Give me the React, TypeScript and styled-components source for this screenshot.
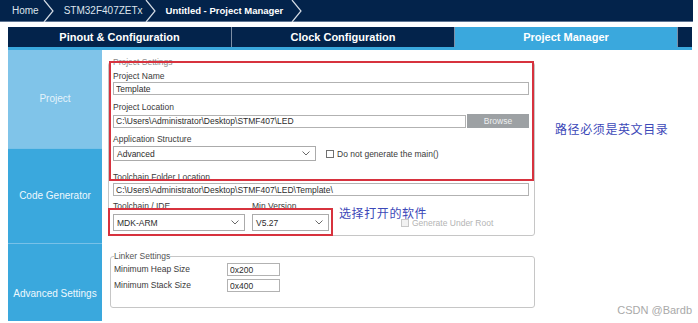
import React from 'react'
import styled, { createGlobalStyle } from 'styled-components'

const GlobalStyle = createGlobalStyle`
  html, body { margin: 0; padding: 0; background: #fff; }
  body { font-family: "Liberation Sans", Arial, sans-serif; }
  * { box-sizing: border-box; }
`

const Page = styled.div`
  width: 698px;
  height: 323px;
  overflow: hidden;
  position: relative;
  background: #fff;
`

const Breadcrumbs = styled.div`
  display: flex;
  align-items: center;
  width: 693px;
  height: 22px;
  padding-left: 12px;
  background: #03234b;
  border-bottom: 1px solid #5d7391;
`

const Crumb = styled.div<{ $bold?: boolean; $gap: number }>`
  display: flex;
  align-items: center;
  height: 100%;
  margin-right: 10px;
  color: ${({ $bold }) => $bold ? '#fff' : '#dde4ec'};
  font-size: ${({ $bold }) => $bold ? '9.5px' : '10px'};
  font-weight: ${({ $bold }) => $bold ? 'bold' : 'normal'};
  white-space: nowrap;

  svg {
    margin-left: ${({ $gap }) => $gap}px;
  }
`

const TabBar = styled.div`
  display: flex;
  margin: 5px 0 0 8px;
  width: 684px;
  height: 20px;
  background: #03234b;
`

const Tab = styled.div<{ $active?: boolean }>`
  width: 223px;
  display: flex;
  align-items: center;
  justify-content: center;
  background: ${({ $active }) => $active ? '#3aa8dd' : '#03234b'};
  color: #fff;
  font-size: 11px;
  font-weight: bold;

  & + & {
    border-left: 1px solid #7d8ea5;
  }
`

const TabFill = styled.div`
  flex: 1;
  border-left: 1px solid #7d8ea5;
`

const Strip = styled.div`
  margin-left: 8px;
  width: 684px;
  height: 3px;
  background: #3aa8dd;
`

const Body = styled.div`
  display: flex;
  margin-left: 8px;
  height: 273px;
`

const Sidebar = styled.div`
  width: 94px;
  display: flex;
  flex-direction: column;
`

const SideItem = styled.div<{ $light?: boolean; $h: number; $top?: number }>`
  height: ${({ $h }) => $h}px;
  display: flex;
  justify-content: center;
  align-items: ${({ $top }) => $top ? 'flex-start' : 'center'};
  padding-top: ${({ $top }) => $top || 0}px;
  background: ${({ $light }) => $light ? '#80c4e9' : '#3aa8dd'};
  color: ${({ $light }) => $light ? '#e4f3fb' : '#eef8fd'};
  font-size: 10px;
  line-height: 12px;
  white-space: nowrap;

  & + & {
    border-top: 1px solid #78c1e8;
  }
`

const Panel = styled.div`
  position: relative;
  flex: 1;
  padding: 7px 0 0 6px;
`

const Group = styled.fieldset<{ $w: number; $ml?: number; $mt?: number; $pl: number; $pb: number }>`
  margin: ${({ $mt }) => $mt || 0}px 0 0 ${({ $ml }) => $ml || 0}px;
  width: ${({ $w }) => $w}px;
  min-width: 0;
  padding: 0 5px ${({ $pb }) => $pb}px ${({ $pl }) => $pl}px;
  border: 1px solid #c6c6c6;
  border-radius: 3px;

  legend {
    padding: 0;
    font-size: 8.5px;
    line-height: 11px;
  }
`

const Legend = styled.legend<{ $muted?: boolean }>`
  color: ${({ $muted }) => $muted ? '#8a8a8a' : '#555'};
`

const Label = styled.div<{ $mt: number; $w?: number }>`
  margin-top: ${({ $mt }) => $mt}px;
  width: ${({ $w }) => $w ? `${$w}px` : 'auto'};
  font-size: 8.5px;
  line-height: 11px;
  color: #3a3a3a;
  white-space: nowrap;
`

const Row = styled.div<{ $mt: number }>`
  display: flex;
  align-items: center;
  margin-top: ${({ $mt }) => $mt}px;
`

const TextBox = styled.input<{ $w?: number }>`
  display: block;
  width: ${({ $w }) => $w ? `${$w}px` : '100%'};
  height: 13px;
  margin: 0;
  padding: 0 2px;
  border: 1px solid #b2b2b2;
  background: #fff;
  font-family: inherit;
  font-size: 8.5px;
  color: #2c2c2c;
  outline: none;
`

const Button = styled.div`
  width: 62px;
  height: 14px;
  margin-left: 1px;
  display: flex;
  align-items: center;
  justify-content: center;
  background: #9da1a4;
  color: #eef0f1;
  font-size: 8.5px;
`

const Select = styled.div<{ $w: number; $h: number; $ml?: number }>`
  width: ${({ $w }) => $w}px;
  height: ${({ $h }) => $h}px;
  margin-left: ${({ $ml }) => $ml || 0}px;
  display: flex;
  align-items: center;
  justify-content: space-between;
  padding: 0 5px 0 3px;
  border: 1px solid #ababab;
  background: #fff;
  font-size: 8.5px;
  color: #2c2c2c;
`

const Check = styled.div<{ $disabled?: boolean; $ml: number }>`
  display: flex;
  align-items: center;
  margin-left: ${({ $ml }) => $ml}px;
  font-size: 8.5px;
  color: ${({ $disabled }) => $disabled ? '#b4b4b4' : '#3a3a3a'};
  white-space: nowrap;

  span {
    width: 8px;
    height: 8px;
    margin-right: 3px;
    border: 1px solid ${({ $disabled }) => $disabled ? '#c8c8c8' : '#707070'};
    background: ${({ $disabled }) => $disabled ? '#f2f2f2' : '#fff'};
  }
`

const Mark = styled.div<{ $x: number; $y: number; $w: number; $h: number }>`
  position: absolute;
  left: ${({ $x }) => $x}px;
  top: ${({ $y }) => $y}px;
  width: ${({ $w }) => $w}px;
  height: ${({ $h }) => $h}px;
  border: 2px solid #d7323e;
  pointer-events: none;
`

const Note = styled.div<{ $x: number; $y: number }>`
  position: absolute;
  left: ${({ $x }) => $x}px;
  top: ${({ $y }) => $y}px;
  font-family: "Noto Sans CJK SC", sans-serif;
  font-size: 12px;
  line-height: 14px;
  letter-spacing: 0.6px;
  color: #3c48b8;
  white-space: nowrap;
`

const Watermark = styled.div`
  position: absolute;
  right: 6px;
  bottom: 7px;
  font-size: 11px;
  line-height: 12px;
  color: #a9a9a9;
`

const Chevron = () => (
  <svg width="11" height="22" viewBox="0 0 11 22">
    <polyline points="1,0 10,11 1,22" fill="none" stroke="#d4dbe4" strokeWidth="1.2" />
  </svg>
)

const Caret = () => (
  <svg width="8" height="5" viewBox="0 0 8 5">
    <polyline points="0.5,0.5 4,4 7.5,0.5" fill="none" stroke="#6a6a6a" strokeWidth="1" />
  </svg>
)

export default function App() {
  return (
    <Page>
      <GlobalStyle />
      <Breadcrumbs>
        <Crumb $gap={4}>Home<Chevron /></Crumb>
        <Crumb $gap={2}>STM32F407ZETx<Chevron /></Crumb>
        <Crumb $gap={8} $bold>Untitled - Project Manager<Chevron /></Crumb>
      </Breadcrumbs>

      <TabBar>
        <Tab>Pinout &amp; Configuration</Tab>
        <Tab>Clock Configuration</Tab>
        <Tab $active>Project Manager</Tab>
        <TabFill />
      </TabBar>
      <Strip />

      <Body>
        <Sidebar>
          <SideItem $light $h={98}>Project</SideItem>
          <SideItem $h={95}>Code Generator</SideItem>
          <SideItem $h={78} $top={44}>Advanced Settings</SideItem>
        </Sidebar>

        <Panel>
          <Group $w={427} $pl={4} $pb={4}>
            <Legend $muted>Project Settings</Legend>
            <Label $mt={3}>Project Name</Label>
            <TextBox readOnly value="Template" />
            <Label $mt={7}>Project Location</Label>
            <Row $mt={1}>
              <TextBox readOnly $w={353} value="C:\Users\Administrator\Desktop\STMF407\LED" />
              <Button>Browse</Button>
            </Row>
            <Label $mt={6}>Application Structure</Label>
            <Row $mt={1}>
              <Select $w={203} $h={15}>Advanced<Caret /></Select>
              <Check $ml={10}><span />Do not generate the main()</Check>
            </Row>
            <Label $mt={11}>Toolchain Folder Location</Label>
            <TextBox readOnly value="C:\Users\Administrator\Desktop\STMF407\LED\Template\" />
            <Row $mt={5}>
              <Label $mt={0} $w={139}>Toolchain / IDE</Label>
              <Label $mt={0}>Min Version</Label>
            </Row>
            <Row $mt={2}>
              <Select $w={132} $h={17}>MDK-ARM<Caret /></Select>
              <Select $w={77} $h={17} $ml={7}>V5.27<Caret /></Select>
              <Check $ml={72} $disabled><span />Generate Under Root</Check>
            </Row>
          </Group>

          <Group $w={425} $ml={2} $mt={15} $pl={3} $pb={15}>
            <Legend>Linker Settings</Legend>
            <Row $mt={1}>
              <Label $mt={0} $w={113}>Minimum Heap Size</Label>
              <TextBox readOnly $w={53} value="0x200" />
            </Row>
            <Row $mt={3}>
              <Label $mt={0} $w={113}>Minimum Stack Size</Label>
              <TextBox readOnly $w={53} value="0x400" />
            </Row>
          </Group>

          <Mark $x={7} $y={11} $w={425} $h={120} />
          <Mark $x={6} $y={158} $w={225} $h={28} />
          <Note $x={453} $y={72}>路径必须是英文目录</Note>
          <Note $x={237} $y={156}>选择打开的软件</Note>
        </Panel>
      </Body>

      <Watermark>CSDN @Bardb</Watermark>
    </Page>
  )
}
